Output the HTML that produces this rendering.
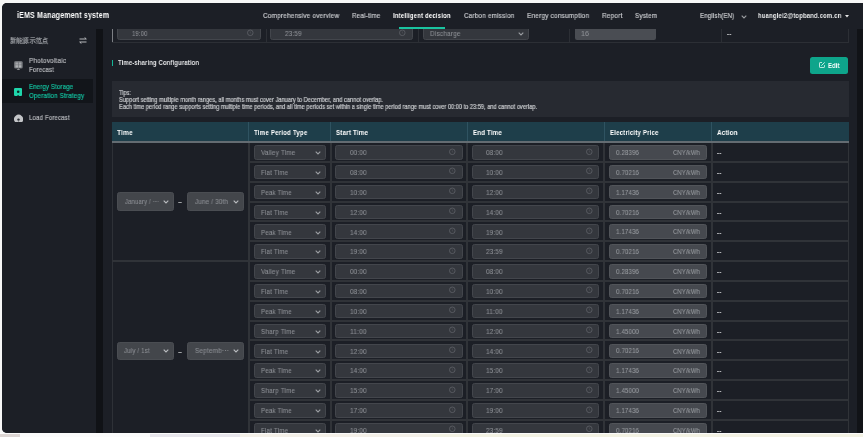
<!DOCTYPE html>
<html><head><meta charset="utf-8"><style>
html,body{margin:0;padding:0;}
body{width:863px;height:437px;position:relative;overflow:hidden;background:#f7f7f7;font-family:'Liberation Sans', sans-serif;}
.t{position:absolute;white-space:nowrap;transform-origin:0 0;will-change:transform;-webkit-text-stroke:0.2px currentColor;}
.b{-webkit-text-stroke:0;}
.g{-webkit-text-stroke:0.1px currentColor;}
</style></head><body>
<div style="position:absolute;left:1.5px;top:2.5px;width:861.5px;height:430.0px;background:#1c1f26;border-radius:5px 0 0 5px;"></div>
<div style="position:absolute;left:112px;top:28px;width:1px;height:14.5px;background:#7d8085;"></div>
<div style="position:absolute;left:112px;top:42px;width:737px;height:1px;background:#2c2f35;"></div>
<div style="position:absolute;left:266px;top:28px;width:1px;height:14.5px;background:#2c2f35;"></div>
<div style="position:absolute;left:418px;top:28px;width:1px;height:14.5px;background:#2c2f35;"></div>
<div style="position:absolute;left:569px;top:28px;width:1px;height:14.5px;background:#2c2f35;"></div>
<div style="position:absolute;left:721px;top:28px;width:1px;height:14.5px;background:#2c2f35;"></div>
<div style="position:absolute;left:848px;top:28px;width:1px;height:14.5px;background:#2c2f35;"></div>
<div style="position:absolute;left:117px;top:24px;width:144px;height:16px;background:#34373d;box-sizing:border-box;border:1px solid #43464c;border-radius:2.5px;"></div>
<div style="position:absolute;left:270px;top:24px;width:143px;height:16px;background:#34373d;box-sizing:border-box;border:1px solid #43464c;border-radius:2.5px;"></div>
<div style="position:absolute;left:423px;top:24px;width:106px;height:16px;background:#34373d;box-sizing:border-box;border:1px solid #43464c;border-radius:2.5px;"></div>
<div style="position:absolute;left:574.5px;top:24px;width:81.5px;height:16px;background:#4a4d53;border-radius:2px;"></div>
<span class="t g" style="transform:scaleX(0.8046);left:131.60px;top:29.85px;font-size:7.26px;line-height:7.26px;color:#8b8e93;font-weight:normal;letter-spacing:0.218px;">19:00</span>
<svg style="position:absolute;left:246.0px;top:29.0px" width="8" height="8" viewBox="0 0 8 8"><circle cx="4.3" cy="3.8" r="2.8" fill="none" stroke="#5f6268" stroke-width="0.8"/><path d="M4.3 2.4 V3.9 L5.2 4.6" fill="none" stroke="#55585e" stroke-width="0.6"/></svg>
<svg style="position:absolute;left:398.3px;top:29.0px" width="8" height="8" viewBox="0 0 8 8"><circle cx="4.3" cy="3.8" r="2.8" fill="none" stroke="#5f6268" stroke-width="0.8"/><path d="M4.3 2.4 V3.9 L5.2 4.6" fill="none" stroke="#55585e" stroke-width="0.6"/></svg>
<svg style="position:absolute;left:517.5px;top:31.8px" width="6" height="4" viewBox="0 0 6 4"><path d="M0.7 0.7 L3 2.9 L5.3 0.7" fill="none" stroke="#9a9da1" stroke-width="1.15"/></svg>
<span class="t g" style="transform:scaleX(0.8677);left:285.00px;top:29.85px;font-size:7.26px;line-height:7.26px;color:#8b8e93;font-weight:normal;letter-spacing:0.218px;">23:59</span>
<span class="t g" style="transform:scaleX(0.8738);left:429.80px;top:29.76px;font-size:7.37px;line-height:7.37px;color:#8b8e93;font-weight:normal;letter-spacing:0.221px;">Discharge</span>
<span class="t g" style="left:581.00px;top:29.85px;font-size:7.26px;line-height:7.26px;color:#8b8e93;font-weight:normal;letter-spacing:0px;">16</span>
<span class="t" style="transform:scaleX(0.8519);left:727.20px;top:30.05px;font-size:7.26px;line-height:7.26px;color:#d8d9db;font-weight:normal;letter-spacing:0.218px;">--</span>
<div style="position:absolute;left:111.8px;top:59.7px;width:1.7000000000000028px;height:6.299999999999997px;background:#14b496;"></div>
<span class="t b" style="transform:scaleX(0.8070);left:118.00px;top:59.05px;font-size:7.26px;line-height:7.26px;color:#e6e7e9;font-weight:bold;letter-spacing:0.218px;">Time-sharing Configuration</span>
<div style="position:absolute;left:810px;top:56.6px;width:38.299999999999955px;height:17.699999999999996px;background:#0ea58b;border-radius:2.5px;"></div>
<span class="t b" style="transform:scaleX(0.7411);left:828.00px;top:61.50px;font-size:7.92px;line-height:7.92px;color:#ffffff;font-weight:bold;letter-spacing:0.238px;">Edit</span>
<div style="position:absolute;left:112px;top:81px;width:737px;height:36px;background:#272a31;"></div>
<span class="t" style="transform:scaleX(0.8400);left:119.30px;top:89.51px;font-size:6.6px;line-height:6.6px;color:#c9cbce;font-weight:normal;letter-spacing:0.0px;">Tips:</span>
<span class="t" style="transform:scaleX(0.8657);left:119.30px;top:96.81px;font-size:6.6px;line-height:6.6px;color:#c9cbce;font-weight:normal;letter-spacing:0.0px;">Support setting multiple month ranges, all months must cover January to December, and cannot overlap.</span>
<span class="t" style="transform:scaleX(0.8594);left:119.30px;top:103.51px;font-size:6.6px;line-height:6.6px;color:#c9cbce;font-weight:normal;letter-spacing:0.0px;">Each time period range supports setting multiple time periods, and all time periods set within a single time period range must cover 00:00 to 23:59, and cannot overlap.</span>
<div style="position:absolute;left:112px;top:122px;width:737px;height:19px;background:#1e3e4a;"></div>
<div style="position:absolute;left:112px;top:141px;width:737px;height:2px;background:#646c72;"></div>
<div style="position:absolute;left:248px;top:122px;width:1px;height:19px;background:#2f5361;"></div>
<div style="position:absolute;left:330px;top:122px;width:1px;height:19px;background:#2f5361;"></div>
<div style="position:absolute;left:467px;top:122px;width:1px;height:19px;background:#2f5361;"></div>
<div style="position:absolute;left:604px;top:122px;width:1px;height:19px;background:#2f5361;"></div>
<div style="position:absolute;left:711px;top:122px;width:1px;height:19px;background:#2f5361;"></div>
<span class="t b" style="transform:scaleX(0.8938);left:117.00px;top:129.15px;font-size:7.26px;line-height:7.26px;color:#ffffff;font-weight:bold;letter-spacing:0.218px;">Time</span>
<span class="t b" style="transform:scaleX(0.8456);left:254.00px;top:129.15px;font-size:7.26px;line-height:7.26px;color:#ffffff;font-weight:bold;letter-spacing:0.218px;">Time Period Type</span>
<span class="t b" style="transform:scaleX(0.8580);left:336.00px;top:129.15px;font-size:7.26px;line-height:7.26px;color:#ffffff;font-weight:bold;letter-spacing:0.218px;">Start Time</span>
<span class="t b" style="transform:scaleX(0.8463);left:472.90px;top:129.15px;font-size:7.26px;line-height:7.26px;color:#ffffff;font-weight:bold;letter-spacing:0.218px;">End Time</span>
<span class="t b" style="transform:scaleX(0.8375);left:609.50px;top:129.15px;font-size:7.26px;line-height:7.26px;color:#ffffff;font-weight:bold;letter-spacing:0.218px;">Electricity Price</span>
<span class="t b" style="transform:scaleX(0.8666);left:716.50px;top:129.15px;font-size:7.26px;line-height:7.26px;color:#ffffff;font-weight:bold;letter-spacing:0.218px;">Action</span>
<div style="position:absolute;left:112px;top:143px;width:1px;height:290px;background:#2e3137;"></div>
<div style="position:absolute;left:248px;top:143px;width:2px;height:290px;background:#303338;"></div>
<div style="position:absolute;left:330px;top:143px;width:2px;height:290px;background:#303338;"></div>
<div style="position:absolute;left:466px;top:143px;width:2px;height:290px;background:#303338;"></div>
<div style="position:absolute;left:603px;top:143px;width:2px;height:290px;background:#303338;"></div>
<div style="position:absolute;left:711px;top:143px;width:2px;height:290px;background:#303338;"></div>
<div style="position:absolute;left:848px;top:143px;width:1px;height:290px;background:#303338;"></div>
<div style="position:absolute;left:248px;top:161px;width:601px;height:2px;background:#303338;"></div>
<div style="position:absolute;left:254.2px;top:145.1px;width:71.80000000000001px;height:14.5px;background:#34373d;box-sizing:border-box;border:1px solid #43464c;border-radius:2.5px;"></div>
<span class="t g" style="transform:scaleX(0.8640);left:260.70px;top:149.16px;font-size:7.37px;line-height:7.37px;color:#8b8e93;font-weight:normal;letter-spacing:0.221px;">Valley Time</span>
<svg style="position:absolute;left:314.8px;top:151.2px" width="6" height="4" viewBox="0 0 6 4"><path d="M0.7 0.7 L3 2.9 L5.3 0.7" fill="none" stroke="#9a9da1" stroke-width="1.15"/></svg>
<div style="position:absolute;left:335.0px;top:145.1px;width:127.5px;height:14.5px;background:#34373d;box-sizing:border-box;border:1px solid #43464c;border-radius:2.5px;"></div>
<span class="t g" style="transform:scaleX(0.8677);left:349.90px;top:149.25px;font-size:7.26px;line-height:7.26px;color:#8b8e93;font-weight:normal;letter-spacing:0.218px;">00:00</span>
<svg style="position:absolute;left:448.3px;top:147.6px" width="8" height="8" viewBox="0 0 8 8"><circle cx="4.3" cy="3.8" r="2.8" fill="none" stroke="#5f6268" stroke-width="0.8"/><path d="M4.3 2.4 V3.9 L5.2 4.6" fill="none" stroke="#55585e" stroke-width="0.6"/></svg>
<div style="position:absolute;left:472px;top:145.1px;width:127px;height:14.5px;background:#34373d;box-sizing:border-box;border:1px solid #43464c;border-radius:2.5px;"></div>
<span class="t g" style="transform:scaleX(0.8677);left:486.20px;top:149.25px;font-size:7.26px;line-height:7.26px;color:#8b8e93;font-weight:normal;letter-spacing:0.218px;">08:00</span>
<svg style="position:absolute;left:585.3px;top:147.6px" width="8" height="8" viewBox="0 0 8 8"><circle cx="4.3" cy="3.8" r="2.8" fill="none" stroke="#5f6268" stroke-width="0.8"/><path d="M4.3 2.4 V3.9 L5.2 4.6" fill="none" stroke="#55585e" stroke-width="0.6"/></svg>
<div style="position:absolute;left:609px;top:145.1px;width:98px;height:14.5px;background:#46494f;box-sizing:border-box;border:1px solid #515459;border-radius:2.5px;"></div>
<span class="t g" style="transform:scaleX(0.8488);left:616.30px;top:150.05px;font-size:7.15px;line-height:7.15px;color:#95989d;font-weight:normal;letter-spacing:0.214px;">0.28396</span>
<span class="t g" style="transform:scaleX(0.8607);left:673.20px;top:150.13px;font-size:6.82px;line-height:6.82px;color:#95989d;font-weight:normal;letter-spacing:0.205px;">CNY/kWh</span>
<span class="t" style="transform:scaleX(0.8519);left:716.60px;top:149.15px;font-size:7.26px;line-height:7.26px;color:#d8d9db;font-weight:normal;letter-spacing:0.218px;">--</span>
<div style="position:absolute;left:248px;top:181px;width:601px;height:2px;background:#303338;"></div>
<div style="position:absolute;left:254.2px;top:164.94px;width:71.80000000000001px;height:14.5px;background:#34373d;box-sizing:border-box;border:1px solid #43464c;border-radius:2.5px;"></div>
<span class="t g" style="transform:scaleX(0.8461);left:260.70px;top:169.00px;font-size:7.37px;line-height:7.37px;color:#8b8e93;font-weight:normal;letter-spacing:0.221px;">Flat Time</span>
<svg style="position:absolute;left:314.8px;top:171.04px" width="6" height="4" viewBox="0 0 6 4"><path d="M0.7 0.7 L3 2.9 L5.3 0.7" fill="none" stroke="#9a9da1" stroke-width="1.15"/></svg>
<div style="position:absolute;left:335.0px;top:164.94px;width:127.5px;height:14.5px;background:#34373d;box-sizing:border-box;border:1px solid #43464c;border-radius:2.5px;"></div>
<span class="t g" style="transform:scaleX(0.8677);left:349.90px;top:169.09px;font-size:7.26px;line-height:7.26px;color:#8b8e93;font-weight:normal;letter-spacing:0.218px;">08:00</span>
<svg style="position:absolute;left:448.3px;top:167.44px" width="8" height="8" viewBox="0 0 8 8"><circle cx="4.3" cy="3.8" r="2.8" fill="none" stroke="#5f6268" stroke-width="0.8"/><path d="M4.3 2.4 V3.9 L5.2 4.6" fill="none" stroke="#55585e" stroke-width="0.6"/></svg>
<div style="position:absolute;left:472px;top:164.94px;width:127px;height:14.5px;background:#34373d;box-sizing:border-box;border:1px solid #43464c;border-radius:2.5px;"></div>
<span class="t g" style="transform:scaleX(0.8677);left:486.20px;top:169.09px;font-size:7.26px;line-height:7.26px;color:#8b8e93;font-weight:normal;letter-spacing:0.218px;">10:00</span>
<svg style="position:absolute;left:585.3px;top:167.44px" width="8" height="8" viewBox="0 0 8 8"><circle cx="4.3" cy="3.8" r="2.8" fill="none" stroke="#5f6268" stroke-width="0.8"/><path d="M4.3 2.4 V3.9 L5.2 4.6" fill="none" stroke="#55585e" stroke-width="0.6"/></svg>
<div style="position:absolute;left:609px;top:164.94px;width:98px;height:14.5px;background:#46494f;box-sizing:border-box;border:1px solid #515459;border-radius:2.5px;"></div>
<span class="t g" style="transform:scaleX(0.8488);left:616.30px;top:169.89px;font-size:7.15px;line-height:7.15px;color:#95989d;font-weight:normal;letter-spacing:0.214px;">0.70216</span>
<span class="t g" style="transform:scaleX(0.8607);left:673.20px;top:169.97px;font-size:6.82px;line-height:6.82px;color:#95989d;font-weight:normal;letter-spacing:0.205px;">CNY/kWh</span>
<span class="t" style="transform:scaleX(0.8519);left:716.60px;top:168.99px;font-size:7.26px;line-height:7.26px;color:#d8d9db;font-weight:normal;letter-spacing:0.218px;">--</span>
<div style="position:absolute;left:248px;top:201px;width:601px;height:2px;background:#303338;"></div>
<div style="position:absolute;left:254.2px;top:184.78px;width:71.80000000000001px;height:14.5px;background:#34373d;box-sizing:border-box;border:1px solid #43464c;border-radius:2.5px;"></div>
<span class="t g" style="transform:scaleX(0.8373);left:260.70px;top:188.84px;font-size:7.37px;line-height:7.37px;color:#8b8e93;font-weight:normal;letter-spacing:0.221px;">Peak Time</span>
<svg style="position:absolute;left:314.8px;top:190.88px" width="6" height="4" viewBox="0 0 6 4"><path d="M0.7 0.7 L3 2.9 L5.3 0.7" fill="none" stroke="#9a9da1" stroke-width="1.15"/></svg>
<div style="position:absolute;left:335.0px;top:184.78px;width:127.5px;height:14.5px;background:#34373d;box-sizing:border-box;border:1px solid #43464c;border-radius:2.5px;"></div>
<span class="t g" style="transform:scaleX(0.8677);left:349.90px;top:188.93px;font-size:7.26px;line-height:7.26px;color:#8b8e93;font-weight:normal;letter-spacing:0.218px;">10:00</span>
<svg style="position:absolute;left:448.3px;top:187.28px" width="8" height="8" viewBox="0 0 8 8"><circle cx="4.3" cy="3.8" r="2.8" fill="none" stroke="#5f6268" stroke-width="0.8"/><path d="M4.3 2.4 V3.9 L5.2 4.6" fill="none" stroke="#55585e" stroke-width="0.6"/></svg>
<div style="position:absolute;left:472px;top:184.78px;width:127px;height:14.5px;background:#34373d;box-sizing:border-box;border:1px solid #43464c;border-radius:2.5px;"></div>
<span class="t g" style="transform:scaleX(0.8677);left:486.20px;top:188.93px;font-size:7.26px;line-height:7.26px;color:#8b8e93;font-weight:normal;letter-spacing:0.218px;">12:00</span>
<svg style="position:absolute;left:585.3px;top:187.28px" width="8" height="8" viewBox="0 0 8 8"><circle cx="4.3" cy="3.8" r="2.8" fill="none" stroke="#5f6268" stroke-width="0.8"/><path d="M4.3 2.4 V3.9 L5.2 4.6" fill="none" stroke="#55585e" stroke-width="0.6"/></svg>
<div style="position:absolute;left:609px;top:184.78px;width:98px;height:14.5px;background:#46494f;box-sizing:border-box;border:1px solid #515459;border-radius:2.5px;"></div>
<span class="t g" style="transform:scaleX(0.8488);left:616.30px;top:189.73px;font-size:7.15px;line-height:7.15px;color:#95989d;font-weight:normal;letter-spacing:0.214px;">1.17436</span>
<span class="t g" style="transform:scaleX(0.8607);left:673.20px;top:189.81px;font-size:6.82px;line-height:6.82px;color:#95989d;font-weight:normal;letter-spacing:0.205px;">CNY/kWh</span>
<span class="t" style="transform:scaleX(0.8519);left:716.60px;top:188.83px;font-size:7.26px;line-height:7.26px;color:#d8d9db;font-weight:normal;letter-spacing:0.218px;">--</span>
<div style="position:absolute;left:248px;top:220px;width:601px;height:2px;background:#303338;"></div>
<div style="position:absolute;left:254.2px;top:204.61999999999998px;width:71.80000000000001px;height:14.5px;background:#34373d;box-sizing:border-box;border:1px solid #43464c;border-radius:2.5px;"></div>
<span class="t g" style="transform:scaleX(0.8461);left:260.70px;top:208.68px;font-size:7.37px;line-height:7.37px;color:#8b8e93;font-weight:normal;letter-spacing:0.221px;">Flat Time</span>
<svg style="position:absolute;left:314.8px;top:210.71999999999997px" width="6" height="4" viewBox="0 0 6 4"><path d="M0.7 0.7 L3 2.9 L5.3 0.7" fill="none" stroke="#9a9da1" stroke-width="1.15"/></svg>
<div style="position:absolute;left:335.0px;top:204.61999999999998px;width:127.5px;height:14.5px;background:#34373d;box-sizing:border-box;border:1px solid #43464c;border-radius:2.5px;"></div>
<span class="t g" style="transform:scaleX(0.8677);left:349.90px;top:208.77px;font-size:7.26px;line-height:7.26px;color:#8b8e93;font-weight:normal;letter-spacing:0.218px;">12:00</span>
<svg style="position:absolute;left:448.3px;top:207.11999999999998px" width="8" height="8" viewBox="0 0 8 8"><circle cx="4.3" cy="3.8" r="2.8" fill="none" stroke="#5f6268" stroke-width="0.8"/><path d="M4.3 2.4 V3.9 L5.2 4.6" fill="none" stroke="#55585e" stroke-width="0.6"/></svg>
<div style="position:absolute;left:472px;top:204.61999999999998px;width:127px;height:14.5px;background:#34373d;box-sizing:border-box;border:1px solid #43464c;border-radius:2.5px;"></div>
<span class="t g" style="transform:scaleX(0.8677);left:486.20px;top:208.77px;font-size:7.26px;line-height:7.26px;color:#8b8e93;font-weight:normal;letter-spacing:0.218px;">14:00</span>
<svg style="position:absolute;left:585.3px;top:207.11999999999998px" width="8" height="8" viewBox="0 0 8 8"><circle cx="4.3" cy="3.8" r="2.8" fill="none" stroke="#5f6268" stroke-width="0.8"/><path d="M4.3 2.4 V3.9 L5.2 4.6" fill="none" stroke="#55585e" stroke-width="0.6"/></svg>
<div style="position:absolute;left:609px;top:204.61999999999998px;width:98px;height:14.5px;background:#46494f;box-sizing:border-box;border:1px solid #515459;border-radius:2.5px;"></div>
<span class="t g" style="transform:scaleX(0.8488);left:616.30px;top:209.57px;font-size:7.15px;line-height:7.15px;color:#95989d;font-weight:normal;letter-spacing:0.214px;">0.70216</span>
<span class="t g" style="transform:scaleX(0.8607);left:673.20px;top:209.65px;font-size:6.82px;line-height:6.82px;color:#95989d;font-weight:normal;letter-spacing:0.205px;">CNY/kWh</span>
<span class="t" style="transform:scaleX(0.8519);left:716.60px;top:208.67px;font-size:7.26px;line-height:7.26px;color:#d8d9db;font-weight:normal;letter-spacing:0.218px;">--</span>
<div style="position:absolute;left:248px;top:240px;width:601px;height:2px;background:#303338;"></div>
<div style="position:absolute;left:254.2px;top:224.46px;width:71.80000000000001px;height:14.5px;background:#34373d;box-sizing:border-box;border:1px solid #43464c;border-radius:2.5px;"></div>
<span class="t g" style="transform:scaleX(0.8373);left:260.70px;top:228.52px;font-size:7.37px;line-height:7.37px;color:#8b8e93;font-weight:normal;letter-spacing:0.221px;">Peak Time</span>
<svg style="position:absolute;left:314.8px;top:230.56px" width="6" height="4" viewBox="0 0 6 4"><path d="M0.7 0.7 L3 2.9 L5.3 0.7" fill="none" stroke="#9a9da1" stroke-width="1.15"/></svg>
<div style="position:absolute;left:335.0px;top:224.46px;width:127.5px;height:14.5px;background:#34373d;box-sizing:border-box;border:1px solid #43464c;border-radius:2.5px;"></div>
<span class="t g" style="transform:scaleX(0.8677);left:349.90px;top:228.61px;font-size:7.26px;line-height:7.26px;color:#8b8e93;font-weight:normal;letter-spacing:0.218px;">14:00</span>
<svg style="position:absolute;left:448.3px;top:226.96px" width="8" height="8" viewBox="0 0 8 8"><circle cx="4.3" cy="3.8" r="2.8" fill="none" stroke="#5f6268" stroke-width="0.8"/><path d="M4.3 2.4 V3.9 L5.2 4.6" fill="none" stroke="#55585e" stroke-width="0.6"/></svg>
<div style="position:absolute;left:472px;top:224.46px;width:127px;height:14.5px;background:#34373d;box-sizing:border-box;border:1px solid #43464c;border-radius:2.5px;"></div>
<span class="t g" style="transform:scaleX(0.8677);left:486.20px;top:228.61px;font-size:7.26px;line-height:7.26px;color:#8b8e93;font-weight:normal;letter-spacing:0.218px;">19:00</span>
<svg style="position:absolute;left:585.3px;top:226.96px" width="8" height="8" viewBox="0 0 8 8"><circle cx="4.3" cy="3.8" r="2.8" fill="none" stroke="#5f6268" stroke-width="0.8"/><path d="M4.3 2.4 V3.9 L5.2 4.6" fill="none" stroke="#55585e" stroke-width="0.6"/></svg>
<div style="position:absolute;left:609px;top:224.46px;width:98px;height:14.5px;background:#46494f;box-sizing:border-box;border:1px solid #515459;border-radius:2.5px;"></div>
<span class="t g" style="transform:scaleX(0.8488);left:616.30px;top:229.41px;font-size:7.15px;line-height:7.15px;color:#95989d;font-weight:normal;letter-spacing:0.214px;">1.17436</span>
<span class="t g" style="transform:scaleX(0.8607);left:673.20px;top:229.49px;font-size:6.82px;line-height:6.82px;color:#95989d;font-weight:normal;letter-spacing:0.205px;">CNY/kWh</span>
<span class="t" style="transform:scaleX(0.8519);left:716.60px;top:228.51px;font-size:7.26px;line-height:7.26px;color:#d8d9db;font-weight:normal;letter-spacing:0.218px;">--</span>
<div style="position:absolute;left:112px;top:260px;width:737px;height:2px;background:#303338;"></div>
<div style="position:absolute;left:254.2px;top:244.29999999999998px;width:71.80000000000001px;height:14.500000000000028px;background:#34373d;box-sizing:border-box;border:1px solid #43464c;border-radius:2.5px;"></div>
<span class="t g" style="transform:scaleX(0.8461);left:260.70px;top:248.36px;font-size:7.37px;line-height:7.37px;color:#8b8e93;font-weight:normal;letter-spacing:0.221px;">Flat Time</span>
<svg style="position:absolute;left:314.8px;top:250.39999999999998px" width="6" height="4" viewBox="0 0 6 4"><path d="M0.7 0.7 L3 2.9 L5.3 0.7" fill="none" stroke="#9a9da1" stroke-width="1.15"/></svg>
<div style="position:absolute;left:335.0px;top:244.29999999999998px;width:127.5px;height:14.500000000000028px;background:#34373d;box-sizing:border-box;border:1px solid #43464c;border-radius:2.5px;"></div>
<span class="t g" style="transform:scaleX(0.8677);left:349.90px;top:248.45px;font-size:7.26px;line-height:7.26px;color:#8b8e93;font-weight:normal;letter-spacing:0.218px;">19:00</span>
<svg style="position:absolute;left:448.3px;top:246.79999999999998px" width="8" height="8" viewBox="0 0 8 8"><circle cx="4.3" cy="3.8" r="2.8" fill="none" stroke="#5f6268" stroke-width="0.8"/><path d="M4.3 2.4 V3.9 L5.2 4.6" fill="none" stroke="#55585e" stroke-width="0.6"/></svg>
<div style="position:absolute;left:472px;top:244.29999999999998px;width:127px;height:14.500000000000028px;background:#34373d;box-sizing:border-box;border:1px solid #43464c;border-radius:2.5px;"></div>
<span class="t g" style="transform:scaleX(0.8677);left:486.20px;top:248.45px;font-size:7.26px;line-height:7.26px;color:#8b8e93;font-weight:normal;letter-spacing:0.218px;">23:59</span>
<svg style="position:absolute;left:585.3px;top:246.79999999999998px" width="8" height="8" viewBox="0 0 8 8"><circle cx="4.3" cy="3.8" r="2.8" fill="none" stroke="#5f6268" stroke-width="0.8"/><path d="M4.3 2.4 V3.9 L5.2 4.6" fill="none" stroke="#55585e" stroke-width="0.6"/></svg>
<div style="position:absolute;left:609px;top:244.29999999999998px;width:98px;height:14.500000000000028px;background:#46494f;box-sizing:border-box;border:1px solid #515459;border-radius:2.5px;"></div>
<span class="t g" style="transform:scaleX(0.8488);left:616.30px;top:249.25px;font-size:7.15px;line-height:7.15px;color:#95989d;font-weight:normal;letter-spacing:0.214px;">0.70216</span>
<span class="t g" style="transform:scaleX(0.8607);left:673.20px;top:249.33px;font-size:6.82px;line-height:6.82px;color:#95989d;font-weight:normal;letter-spacing:0.205px;">CNY/kWh</span>
<span class="t" style="transform:scaleX(0.8519);left:716.60px;top:248.35px;font-size:7.26px;line-height:7.26px;color:#d8d9db;font-weight:normal;letter-spacing:0.218px;">--</span>
<div style="position:absolute;left:248px;top:280px;width:601px;height:2px;background:#303338;"></div>
<div style="position:absolute;left:254.2px;top:264.14px;width:71.80000000000001px;height:14.5px;background:#34373d;box-sizing:border-box;border:1px solid #43464c;border-radius:2.5px;"></div>
<span class="t g" style="transform:scaleX(0.8640);left:260.70px;top:268.20px;font-size:7.37px;line-height:7.37px;color:#8b8e93;font-weight:normal;letter-spacing:0.221px;">Valley Time</span>
<svg style="position:absolute;left:314.8px;top:270.23999999999995px" width="6" height="4" viewBox="0 0 6 4"><path d="M0.7 0.7 L3 2.9 L5.3 0.7" fill="none" stroke="#9a9da1" stroke-width="1.15"/></svg>
<div style="position:absolute;left:335.0px;top:264.14px;width:127.5px;height:14.5px;background:#34373d;box-sizing:border-box;border:1px solid #43464c;border-radius:2.5px;"></div>
<span class="t g" style="transform:scaleX(0.8677);left:349.90px;top:268.29px;font-size:7.26px;line-height:7.26px;color:#8b8e93;font-weight:normal;letter-spacing:0.218px;">00:00</span>
<svg style="position:absolute;left:448.3px;top:266.64px" width="8" height="8" viewBox="0 0 8 8"><circle cx="4.3" cy="3.8" r="2.8" fill="none" stroke="#5f6268" stroke-width="0.8"/><path d="M4.3 2.4 V3.9 L5.2 4.6" fill="none" stroke="#55585e" stroke-width="0.6"/></svg>
<div style="position:absolute;left:472px;top:264.14px;width:127px;height:14.5px;background:#34373d;box-sizing:border-box;border:1px solid #43464c;border-radius:2.5px;"></div>
<span class="t g" style="transform:scaleX(0.8677);left:486.20px;top:268.29px;font-size:7.26px;line-height:7.26px;color:#8b8e93;font-weight:normal;letter-spacing:0.218px;">08:00</span>
<svg style="position:absolute;left:585.3px;top:266.64px" width="8" height="8" viewBox="0 0 8 8"><circle cx="4.3" cy="3.8" r="2.8" fill="none" stroke="#5f6268" stroke-width="0.8"/><path d="M4.3 2.4 V3.9 L5.2 4.6" fill="none" stroke="#55585e" stroke-width="0.6"/></svg>
<div style="position:absolute;left:609px;top:264.14px;width:98px;height:14.5px;background:#46494f;box-sizing:border-box;border:1px solid #515459;border-radius:2.5px;"></div>
<span class="t g" style="transform:scaleX(0.8488);left:616.30px;top:269.09px;font-size:7.15px;line-height:7.15px;color:#95989d;font-weight:normal;letter-spacing:0.214px;">0.28396</span>
<span class="t g" style="transform:scaleX(0.8607);left:673.20px;top:269.17px;font-size:6.82px;line-height:6.82px;color:#95989d;font-weight:normal;letter-spacing:0.205px;">CNY/kWh</span>
<span class="t" style="transform:scaleX(0.8519);left:716.60px;top:268.19px;font-size:7.26px;line-height:7.26px;color:#d8d9db;font-weight:normal;letter-spacing:0.218px;">--</span>
<div style="position:absolute;left:248px;top:300px;width:601px;height:2px;background:#303338;"></div>
<div style="position:absolute;left:254.2px;top:283.98px;width:71.80000000000001px;height:14.5px;background:#34373d;box-sizing:border-box;border:1px solid #43464c;border-radius:2.5px;"></div>
<span class="t g" style="transform:scaleX(0.8461);left:260.70px;top:288.04px;font-size:7.37px;line-height:7.37px;color:#8b8e93;font-weight:normal;letter-spacing:0.221px;">Flat Time</span>
<svg style="position:absolute;left:314.8px;top:290.08px" width="6" height="4" viewBox="0 0 6 4"><path d="M0.7 0.7 L3 2.9 L5.3 0.7" fill="none" stroke="#9a9da1" stroke-width="1.15"/></svg>
<div style="position:absolute;left:335.0px;top:283.98px;width:127.5px;height:14.5px;background:#34373d;box-sizing:border-box;border:1px solid #43464c;border-radius:2.5px;"></div>
<span class="t g" style="transform:scaleX(0.8677);left:349.90px;top:288.13px;font-size:7.26px;line-height:7.26px;color:#8b8e93;font-weight:normal;letter-spacing:0.218px;">08:00</span>
<svg style="position:absolute;left:448.3px;top:286.48px" width="8" height="8" viewBox="0 0 8 8"><circle cx="4.3" cy="3.8" r="2.8" fill="none" stroke="#5f6268" stroke-width="0.8"/><path d="M4.3 2.4 V3.9 L5.2 4.6" fill="none" stroke="#55585e" stroke-width="0.6"/></svg>
<div style="position:absolute;left:472px;top:283.98px;width:127px;height:14.5px;background:#34373d;box-sizing:border-box;border:1px solid #43464c;border-radius:2.5px;"></div>
<span class="t g" style="transform:scaleX(0.8677);left:486.20px;top:288.13px;font-size:7.26px;line-height:7.26px;color:#8b8e93;font-weight:normal;letter-spacing:0.218px;">10:00</span>
<svg style="position:absolute;left:585.3px;top:286.48px" width="8" height="8" viewBox="0 0 8 8"><circle cx="4.3" cy="3.8" r="2.8" fill="none" stroke="#5f6268" stroke-width="0.8"/><path d="M4.3 2.4 V3.9 L5.2 4.6" fill="none" stroke="#55585e" stroke-width="0.6"/></svg>
<div style="position:absolute;left:609px;top:283.98px;width:98px;height:14.5px;background:#46494f;box-sizing:border-box;border:1px solid #515459;border-radius:2.5px;"></div>
<span class="t g" style="transform:scaleX(0.8488);left:616.30px;top:288.93px;font-size:7.15px;line-height:7.15px;color:#95989d;font-weight:normal;letter-spacing:0.214px;">0.70216</span>
<span class="t g" style="transform:scaleX(0.8607);left:673.20px;top:289.01px;font-size:6.82px;line-height:6.82px;color:#95989d;font-weight:normal;letter-spacing:0.205px;">CNY/kWh</span>
<span class="t" style="transform:scaleX(0.8519);left:716.60px;top:288.03px;font-size:7.26px;line-height:7.26px;color:#d8d9db;font-weight:normal;letter-spacing:0.218px;">--</span>
<div style="position:absolute;left:248px;top:320px;width:601px;height:2px;background:#303338;"></div>
<div style="position:absolute;left:254.2px;top:303.82000000000005px;width:71.80000000000001px;height:14.5px;background:#34373d;box-sizing:border-box;border:1px solid #43464c;border-radius:2.5px;"></div>
<span class="t g" style="transform:scaleX(0.8373);left:260.70px;top:307.88px;font-size:7.37px;line-height:7.37px;color:#8b8e93;font-weight:normal;letter-spacing:0.221px;">Peak Time</span>
<svg style="position:absolute;left:314.8px;top:309.92px" width="6" height="4" viewBox="0 0 6 4"><path d="M0.7 0.7 L3 2.9 L5.3 0.7" fill="none" stroke="#9a9da1" stroke-width="1.15"/></svg>
<div style="position:absolute;left:335.0px;top:303.82000000000005px;width:127.5px;height:14.5px;background:#34373d;box-sizing:border-box;border:1px solid #43464c;border-radius:2.5px;"></div>
<span class="t g" style="transform:scaleX(0.8677);left:349.90px;top:307.97px;font-size:7.26px;line-height:7.26px;color:#8b8e93;font-weight:normal;letter-spacing:0.218px;">10:00</span>
<svg style="position:absolute;left:448.3px;top:306.32000000000005px" width="8" height="8" viewBox="0 0 8 8"><circle cx="4.3" cy="3.8" r="2.8" fill="none" stroke="#5f6268" stroke-width="0.8"/><path d="M4.3 2.4 V3.9 L5.2 4.6" fill="none" stroke="#55585e" stroke-width="0.6"/></svg>
<div style="position:absolute;left:472px;top:303.82000000000005px;width:127px;height:14.5px;background:#34373d;box-sizing:border-box;border:1px solid #43464c;border-radius:2.5px;"></div>
<span class="t g" style="transform:scaleX(0.8926);left:486.20px;top:307.97px;font-size:7.26px;line-height:7.26px;color:#8b8e93;font-weight:normal;letter-spacing:0.218px;">11:00</span>
<svg style="position:absolute;left:585.3px;top:306.32000000000005px" width="8" height="8" viewBox="0 0 8 8"><circle cx="4.3" cy="3.8" r="2.8" fill="none" stroke="#5f6268" stroke-width="0.8"/><path d="M4.3 2.4 V3.9 L5.2 4.6" fill="none" stroke="#55585e" stroke-width="0.6"/></svg>
<div style="position:absolute;left:609px;top:303.82000000000005px;width:98px;height:14.5px;background:#46494f;box-sizing:border-box;border:1px solid #515459;border-radius:2.5px;"></div>
<span class="t g" style="transform:scaleX(0.8488);left:616.30px;top:308.77px;font-size:7.15px;line-height:7.15px;color:#95989d;font-weight:normal;letter-spacing:0.214px;">1.17436</span>
<span class="t g" style="transform:scaleX(0.8607);left:673.20px;top:308.85px;font-size:6.82px;line-height:6.82px;color:#95989d;font-weight:normal;letter-spacing:0.205px;">CNY/kWh</span>
<span class="t" style="transform:scaleX(0.8519);left:716.60px;top:307.87px;font-size:7.26px;line-height:7.26px;color:#d8d9db;font-weight:normal;letter-spacing:0.218px;">--</span>
<div style="position:absolute;left:248px;top:339px;width:601px;height:2px;background:#303338;"></div>
<div style="position:absolute;left:254.2px;top:323.66px;width:71.80000000000001px;height:14.5px;background:#34373d;box-sizing:border-box;border:1px solid #43464c;border-radius:2.5px;"></div>
<span class="t g" style="transform:scaleX(0.8581);left:260.70px;top:327.72px;font-size:7.37px;line-height:7.37px;color:#8b8e93;font-weight:normal;letter-spacing:0.221px;">Sharp Time</span>
<svg style="position:absolute;left:314.8px;top:329.76px" width="6" height="4" viewBox="0 0 6 4"><path d="M0.7 0.7 L3 2.9 L5.3 0.7" fill="none" stroke="#9a9da1" stroke-width="1.15"/></svg>
<div style="position:absolute;left:335.0px;top:323.66px;width:127.5px;height:14.5px;background:#34373d;box-sizing:border-box;border:1px solid #43464c;border-radius:2.5px;"></div>
<span class="t g" style="transform:scaleX(0.8926);left:349.90px;top:327.81px;font-size:7.26px;line-height:7.26px;color:#8b8e93;font-weight:normal;letter-spacing:0.218px;">11:00</span>
<svg style="position:absolute;left:448.3px;top:326.16px" width="8" height="8" viewBox="0 0 8 8"><circle cx="4.3" cy="3.8" r="2.8" fill="none" stroke="#5f6268" stroke-width="0.8"/><path d="M4.3 2.4 V3.9 L5.2 4.6" fill="none" stroke="#55585e" stroke-width="0.6"/></svg>
<div style="position:absolute;left:472px;top:323.66px;width:127px;height:14.5px;background:#34373d;box-sizing:border-box;border:1px solid #43464c;border-radius:2.5px;"></div>
<span class="t g" style="transform:scaleX(0.8677);left:486.20px;top:327.81px;font-size:7.26px;line-height:7.26px;color:#8b8e93;font-weight:normal;letter-spacing:0.218px;">12:00</span>
<svg style="position:absolute;left:585.3px;top:326.16px" width="8" height="8" viewBox="0 0 8 8"><circle cx="4.3" cy="3.8" r="2.8" fill="none" stroke="#5f6268" stroke-width="0.8"/><path d="M4.3 2.4 V3.9 L5.2 4.6" fill="none" stroke="#55585e" stroke-width="0.6"/></svg>
<div style="position:absolute;left:609px;top:323.66px;width:98px;height:14.5px;background:#46494f;box-sizing:border-box;border:1px solid #515459;border-radius:2.5px;"></div>
<span class="t g" style="transform:scaleX(0.8488);left:616.30px;top:328.61px;font-size:7.15px;line-height:7.15px;color:#95989d;font-weight:normal;letter-spacing:0.214px;">1.45000</span>
<span class="t g" style="transform:scaleX(0.8607);left:673.20px;top:328.69px;font-size:6.82px;line-height:6.82px;color:#95989d;font-weight:normal;letter-spacing:0.205px;">CNY/kWh</span>
<span class="t" style="transform:scaleX(0.8519);left:716.60px;top:327.71px;font-size:7.26px;line-height:7.26px;color:#d8d9db;font-weight:normal;letter-spacing:0.218px;">--</span>
<div style="position:absolute;left:248px;top:359px;width:601px;height:2px;background:#303338;"></div>
<div style="position:absolute;left:254.2px;top:343.5px;width:71.80000000000001px;height:14.5px;background:#34373d;box-sizing:border-box;border:1px solid #43464c;border-radius:2.5px;"></div>
<span class="t g" style="transform:scaleX(0.8461);left:260.70px;top:347.56px;font-size:7.37px;line-height:7.37px;color:#8b8e93;font-weight:normal;letter-spacing:0.221px;">Flat Time</span>
<svg style="position:absolute;left:314.8px;top:349.59999999999997px" width="6" height="4" viewBox="0 0 6 4"><path d="M0.7 0.7 L3 2.9 L5.3 0.7" fill="none" stroke="#9a9da1" stroke-width="1.15"/></svg>
<div style="position:absolute;left:335.0px;top:343.5px;width:127.5px;height:14.5px;background:#34373d;box-sizing:border-box;border:1px solid #43464c;border-radius:2.5px;"></div>
<span class="t g" style="transform:scaleX(0.8677);left:349.90px;top:347.65px;font-size:7.26px;line-height:7.26px;color:#8b8e93;font-weight:normal;letter-spacing:0.218px;">12:00</span>
<svg style="position:absolute;left:448.3px;top:346.0px" width="8" height="8" viewBox="0 0 8 8"><circle cx="4.3" cy="3.8" r="2.8" fill="none" stroke="#5f6268" stroke-width="0.8"/><path d="M4.3 2.4 V3.9 L5.2 4.6" fill="none" stroke="#55585e" stroke-width="0.6"/></svg>
<div style="position:absolute;left:472px;top:343.5px;width:127px;height:14.5px;background:#34373d;box-sizing:border-box;border:1px solid #43464c;border-radius:2.5px;"></div>
<span class="t g" style="transform:scaleX(0.8677);left:486.20px;top:347.65px;font-size:7.26px;line-height:7.26px;color:#8b8e93;font-weight:normal;letter-spacing:0.218px;">14:00</span>
<svg style="position:absolute;left:585.3px;top:346.0px" width="8" height="8" viewBox="0 0 8 8"><circle cx="4.3" cy="3.8" r="2.8" fill="none" stroke="#5f6268" stroke-width="0.8"/><path d="M4.3 2.4 V3.9 L5.2 4.6" fill="none" stroke="#55585e" stroke-width="0.6"/></svg>
<div style="position:absolute;left:609px;top:343.5px;width:98px;height:14.5px;background:#46494f;box-sizing:border-box;border:1px solid #515459;border-radius:2.5px;"></div>
<span class="t g" style="transform:scaleX(0.8488);left:616.30px;top:348.45px;font-size:7.15px;line-height:7.15px;color:#95989d;font-weight:normal;letter-spacing:0.214px;">0.70216</span>
<span class="t g" style="transform:scaleX(0.8607);left:673.20px;top:348.53px;font-size:6.82px;line-height:6.82px;color:#95989d;font-weight:normal;letter-spacing:0.205px;">CNY/kWh</span>
<span class="t" style="transform:scaleX(0.8519);left:716.60px;top:347.55px;font-size:7.26px;line-height:7.26px;color:#d8d9db;font-weight:normal;letter-spacing:0.218px;">--</span>
<div style="position:absolute;left:248px;top:379px;width:601px;height:2px;background:#303338;"></div>
<div style="position:absolute;left:254.2px;top:363.34000000000003px;width:71.80000000000001px;height:14.5px;background:#34373d;box-sizing:border-box;border:1px solid #43464c;border-radius:2.5px;"></div>
<span class="t g" style="transform:scaleX(0.8373);left:260.70px;top:367.40px;font-size:7.37px;line-height:7.37px;color:#8b8e93;font-weight:normal;letter-spacing:0.221px;">Peak Time</span>
<svg style="position:absolute;left:314.8px;top:369.44px" width="6" height="4" viewBox="0 0 6 4"><path d="M0.7 0.7 L3 2.9 L5.3 0.7" fill="none" stroke="#9a9da1" stroke-width="1.15"/></svg>
<div style="position:absolute;left:335.0px;top:363.34000000000003px;width:127.5px;height:14.5px;background:#34373d;box-sizing:border-box;border:1px solid #43464c;border-radius:2.5px;"></div>
<span class="t g" style="transform:scaleX(0.8677);left:349.90px;top:367.49px;font-size:7.26px;line-height:7.26px;color:#8b8e93;font-weight:normal;letter-spacing:0.218px;">14:00</span>
<svg style="position:absolute;left:448.3px;top:365.84000000000003px" width="8" height="8" viewBox="0 0 8 8"><circle cx="4.3" cy="3.8" r="2.8" fill="none" stroke="#5f6268" stroke-width="0.8"/><path d="M4.3 2.4 V3.9 L5.2 4.6" fill="none" stroke="#55585e" stroke-width="0.6"/></svg>
<div style="position:absolute;left:472px;top:363.34000000000003px;width:127px;height:14.5px;background:#34373d;box-sizing:border-box;border:1px solid #43464c;border-radius:2.5px;"></div>
<span class="t g" style="transform:scaleX(0.8677);left:486.20px;top:367.49px;font-size:7.26px;line-height:7.26px;color:#8b8e93;font-weight:normal;letter-spacing:0.218px;">15:00</span>
<svg style="position:absolute;left:585.3px;top:365.84000000000003px" width="8" height="8" viewBox="0 0 8 8"><circle cx="4.3" cy="3.8" r="2.8" fill="none" stroke="#5f6268" stroke-width="0.8"/><path d="M4.3 2.4 V3.9 L5.2 4.6" fill="none" stroke="#55585e" stroke-width="0.6"/></svg>
<div style="position:absolute;left:609px;top:363.34000000000003px;width:98px;height:14.5px;background:#46494f;box-sizing:border-box;border:1px solid #515459;border-radius:2.5px;"></div>
<span class="t g" style="transform:scaleX(0.8488);left:616.30px;top:368.29px;font-size:7.15px;line-height:7.15px;color:#95989d;font-weight:normal;letter-spacing:0.214px;">1.17436</span>
<span class="t g" style="transform:scaleX(0.8607);left:673.20px;top:368.37px;font-size:6.82px;line-height:6.82px;color:#95989d;font-weight:normal;letter-spacing:0.205px;">CNY/kWh</span>
<span class="t" style="transform:scaleX(0.8519);left:716.60px;top:367.39px;font-size:7.26px;line-height:7.26px;color:#d8d9db;font-weight:normal;letter-spacing:0.218px;">--</span>
<div style="position:absolute;left:248px;top:399px;width:601px;height:2px;background:#303338;"></div>
<div style="position:absolute;left:254.2px;top:383.18px;width:71.80000000000001px;height:14.5px;background:#34373d;box-sizing:border-box;border:1px solid #43464c;border-radius:2.5px;"></div>
<span class="t g" style="transform:scaleX(0.8581);left:260.70px;top:387.24px;font-size:7.37px;line-height:7.37px;color:#8b8e93;font-weight:normal;letter-spacing:0.221px;">Sharp Time</span>
<svg style="position:absolute;left:314.8px;top:389.28px" width="6" height="4" viewBox="0 0 6 4"><path d="M0.7 0.7 L3 2.9 L5.3 0.7" fill="none" stroke="#9a9da1" stroke-width="1.15"/></svg>
<div style="position:absolute;left:335.0px;top:383.18px;width:127.5px;height:14.5px;background:#34373d;box-sizing:border-box;border:1px solid #43464c;border-radius:2.5px;"></div>
<span class="t g" style="transform:scaleX(0.8677);left:349.90px;top:387.33px;font-size:7.26px;line-height:7.26px;color:#8b8e93;font-weight:normal;letter-spacing:0.218px;">15:00</span>
<svg style="position:absolute;left:448.3px;top:385.68px" width="8" height="8" viewBox="0 0 8 8"><circle cx="4.3" cy="3.8" r="2.8" fill="none" stroke="#5f6268" stroke-width="0.8"/><path d="M4.3 2.4 V3.9 L5.2 4.6" fill="none" stroke="#55585e" stroke-width="0.6"/></svg>
<div style="position:absolute;left:472px;top:383.18px;width:127px;height:14.5px;background:#34373d;box-sizing:border-box;border:1px solid #43464c;border-radius:2.5px;"></div>
<span class="t g" style="transform:scaleX(0.8677);left:486.20px;top:387.33px;font-size:7.26px;line-height:7.26px;color:#8b8e93;font-weight:normal;letter-spacing:0.218px;">17:00</span>
<svg style="position:absolute;left:585.3px;top:385.68px" width="8" height="8" viewBox="0 0 8 8"><circle cx="4.3" cy="3.8" r="2.8" fill="none" stroke="#5f6268" stroke-width="0.8"/><path d="M4.3 2.4 V3.9 L5.2 4.6" fill="none" stroke="#55585e" stroke-width="0.6"/></svg>
<div style="position:absolute;left:609px;top:383.18px;width:98px;height:14.5px;background:#46494f;box-sizing:border-box;border:1px solid #515459;border-radius:2.5px;"></div>
<span class="t g" style="transform:scaleX(0.8488);left:616.30px;top:388.13px;font-size:7.15px;line-height:7.15px;color:#95989d;font-weight:normal;letter-spacing:0.214px;">1.45000</span>
<span class="t g" style="transform:scaleX(0.8607);left:673.20px;top:388.21px;font-size:6.82px;line-height:6.82px;color:#95989d;font-weight:normal;letter-spacing:0.205px;">CNY/kWh</span>
<span class="t" style="transform:scaleX(0.8519);left:716.60px;top:387.23px;font-size:7.26px;line-height:7.26px;color:#d8d9db;font-weight:normal;letter-spacing:0.218px;">--</span>
<div style="position:absolute;left:248px;top:419px;width:601px;height:2px;background:#303338;"></div>
<div style="position:absolute;left:254.2px;top:403.02000000000004px;width:71.80000000000001px;height:14.5px;background:#34373d;box-sizing:border-box;border:1px solid #43464c;border-radius:2.5px;"></div>
<span class="t g" style="transform:scaleX(0.8373);left:260.70px;top:407.08px;font-size:7.37px;line-height:7.37px;color:#8b8e93;font-weight:normal;letter-spacing:0.221px;">Peak Time</span>
<svg style="position:absolute;left:314.8px;top:409.12px" width="6" height="4" viewBox="0 0 6 4"><path d="M0.7 0.7 L3 2.9 L5.3 0.7" fill="none" stroke="#9a9da1" stroke-width="1.15"/></svg>
<div style="position:absolute;left:335.0px;top:403.02000000000004px;width:127.5px;height:14.5px;background:#34373d;box-sizing:border-box;border:1px solid #43464c;border-radius:2.5px;"></div>
<span class="t g" style="transform:scaleX(0.8677);left:349.90px;top:407.17px;font-size:7.26px;line-height:7.26px;color:#8b8e93;font-weight:normal;letter-spacing:0.218px;">17:00</span>
<svg style="position:absolute;left:448.3px;top:405.52000000000004px" width="8" height="8" viewBox="0 0 8 8"><circle cx="4.3" cy="3.8" r="2.8" fill="none" stroke="#5f6268" stroke-width="0.8"/><path d="M4.3 2.4 V3.9 L5.2 4.6" fill="none" stroke="#55585e" stroke-width="0.6"/></svg>
<div style="position:absolute;left:472px;top:403.02000000000004px;width:127px;height:14.5px;background:#34373d;box-sizing:border-box;border:1px solid #43464c;border-radius:2.5px;"></div>
<span class="t g" style="transform:scaleX(0.8677);left:486.20px;top:407.17px;font-size:7.26px;line-height:7.26px;color:#8b8e93;font-weight:normal;letter-spacing:0.218px;">19:00</span>
<svg style="position:absolute;left:585.3px;top:405.52000000000004px" width="8" height="8" viewBox="0 0 8 8"><circle cx="4.3" cy="3.8" r="2.8" fill="none" stroke="#5f6268" stroke-width="0.8"/><path d="M4.3 2.4 V3.9 L5.2 4.6" fill="none" stroke="#55585e" stroke-width="0.6"/></svg>
<div style="position:absolute;left:609px;top:403.02000000000004px;width:98px;height:14.5px;background:#46494f;box-sizing:border-box;border:1px solid #515459;border-radius:2.5px;"></div>
<span class="t g" style="transform:scaleX(0.8488);left:616.30px;top:407.97px;font-size:7.15px;line-height:7.15px;color:#95989d;font-weight:normal;letter-spacing:0.214px;">1.17436</span>
<span class="t g" style="transform:scaleX(0.8607);left:673.20px;top:408.05px;font-size:6.82px;line-height:6.82px;color:#95989d;font-weight:normal;letter-spacing:0.205px;">CNY/kWh</span>
<span class="t" style="transform:scaleX(0.8519);left:716.60px;top:407.07px;font-size:7.26px;line-height:7.26px;color:#d8d9db;font-weight:normal;letter-spacing:0.218px;">--</span>
<div style="position:absolute;left:248px;top:439px;width:601px;height:2px;background:#303338;"></div>
<div style="position:absolute;left:254.2px;top:422.86px;width:71.80000000000001px;height:14.5px;background:#34373d;box-sizing:border-box;border:1px solid #43464c;border-radius:2.5px;"></div>
<span class="t g" style="transform:scaleX(0.8461);left:260.70px;top:426.92px;font-size:7.37px;line-height:7.37px;color:#8b8e93;font-weight:normal;letter-spacing:0.221px;">Flat Time</span>
<svg style="position:absolute;left:314.8px;top:428.96px" width="6" height="4" viewBox="0 0 6 4"><path d="M0.7 0.7 L3 2.9 L5.3 0.7" fill="none" stroke="#9a9da1" stroke-width="1.15"/></svg>
<div style="position:absolute;left:335.0px;top:422.86px;width:127.5px;height:14.5px;background:#34373d;box-sizing:border-box;border:1px solid #43464c;border-radius:2.5px;"></div>
<span class="t g" style="transform:scaleX(0.8677);left:349.90px;top:427.01px;font-size:7.26px;line-height:7.26px;color:#8b8e93;font-weight:normal;letter-spacing:0.218px;">19:00</span>
<svg style="position:absolute;left:448.3px;top:425.36px" width="8" height="8" viewBox="0 0 8 8"><circle cx="4.3" cy="3.8" r="2.8" fill="none" stroke="#5f6268" stroke-width="0.8"/><path d="M4.3 2.4 V3.9 L5.2 4.6" fill="none" stroke="#55585e" stroke-width="0.6"/></svg>
<div style="position:absolute;left:472px;top:422.86px;width:127px;height:14.5px;background:#34373d;box-sizing:border-box;border:1px solid #43464c;border-radius:2.5px;"></div>
<span class="t g" style="transform:scaleX(0.8677);left:486.20px;top:427.01px;font-size:7.26px;line-height:7.26px;color:#8b8e93;font-weight:normal;letter-spacing:0.218px;">23:59</span>
<svg style="position:absolute;left:585.3px;top:425.36px" width="8" height="8" viewBox="0 0 8 8"><circle cx="4.3" cy="3.8" r="2.8" fill="none" stroke="#5f6268" stroke-width="0.8"/><path d="M4.3 2.4 V3.9 L5.2 4.6" fill="none" stroke="#55585e" stroke-width="0.6"/></svg>
<div style="position:absolute;left:609px;top:422.86px;width:98px;height:14.5px;background:#46494f;box-sizing:border-box;border:1px solid #515459;border-radius:2.5px;"></div>
<span class="t g" style="transform:scaleX(0.8488);left:616.30px;top:427.81px;font-size:7.15px;line-height:7.15px;color:#95989d;font-weight:normal;letter-spacing:0.214px;">0.70216</span>
<span class="t g" style="transform:scaleX(0.8607);left:673.20px;top:427.89px;font-size:6.82px;line-height:6.82px;color:#95989d;font-weight:normal;letter-spacing:0.205px;">CNY/kWh</span>
<span class="t" style="transform:scaleX(0.8519);left:716.60px;top:426.91px;font-size:7.26px;line-height:7.26px;color:#d8d9db;font-weight:normal;letter-spacing:0.218px;">--</span>
<div style="position:absolute;left:117px;top:192.3px;width:56.69999999999999px;height:18.399999999999977px;background:#43464b;box-sizing:border-box;border:1px solid #4a4d52;border-radius:2.5px;"></div>
<span class="t g" style="transform:scaleX(0.8153);left:124.50px;top:197.65px;font-size:7.26px;line-height:7.26px;color:#8b8e93;font-weight:normal;letter-spacing:0.218px;">January / ···</span>
<svg style="position:absolute;left:163.0px;top:199.7px" width="6" height="4" viewBox="0 0 6 4"><path d="M0.7 0.7 L3 2.9 L5.3 0.7" fill="none" stroke="#b9bbbf" stroke-width="1.15"/></svg>
<span class="t b" style="left:178.40px;top:200.23px;font-size:6.82px;line-height:6.82px;color:#c8c9cb;font-weight:bold;letter-spacing:0px;">~</span>
<div style="position:absolute;left:187px;top:192.3px;width:57px;height:18.399999999999977px;background:#43464b;box-sizing:border-box;border:1px solid #4a4d52;border-radius:2.5px;"></div>
<span class="t g" style="transform:scaleX(0.8670);left:194.50px;top:197.65px;font-size:7.26px;line-height:7.26px;color:#8b8e93;font-weight:normal;letter-spacing:0.218px;">June / 30th</span>
<svg style="position:absolute;left:233.3px;top:199.7px" width="6" height="4" viewBox="0 0 6 4"><path d="M0.7 0.7 L3 2.9 L5.3 0.7" fill="none" stroke="#b9bbbf" stroke-width="1.15"/></svg>
<div style="position:absolute;left:116.5px;top:341.8px;width:57.30000000000001px;height:18.399999999999977px;background:#43464b;box-sizing:border-box;border:1px solid #4a4d52;border-radius:2.5px;"></div>
<span class="t g" style="transform:scaleX(0.8404);left:124.00px;top:347.15px;font-size:7.26px;line-height:7.26px;color:#8b8e93;font-weight:normal;letter-spacing:0.218px;">July / 1st</span>
<svg style="position:absolute;left:163.10000000000002px;top:349.2px" width="6" height="4" viewBox="0 0 6 4"><path d="M0.7 0.7 L3 2.9 L5.3 0.7" fill="none" stroke="#b9bbbf" stroke-width="1.15"/></svg>
<span class="t b" style="left:178.40px;top:349.73px;font-size:6.82px;line-height:6.82px;color:#c8c9cb;font-weight:bold;letter-spacing:0px;">~</span>
<div style="position:absolute;left:187px;top:341.8px;width:57px;height:18.399999999999977px;background:#43464b;box-sizing:border-box;border:1px solid #4a4d52;border-radius:2.5px;"></div>
<span class="t g" style="transform:scaleX(0.8840);left:194.50px;top:347.15px;font-size:7.26px;line-height:7.26px;color:#8b8e93;font-weight:normal;letter-spacing:0.218px;">Septemb···</span>
<svg style="position:absolute;left:233.3px;top:349.2px" width="6" height="4" viewBox="0 0 6 4"><path d="M0.7 0.7 L3 2.9 L5.3 0.7" fill="none" stroke="#b9bbbf" stroke-width="1.15"/></svg>
<div style="position:absolute;left:857px;top:28.5px;width:6px;height:404.0px;background:#111317;"></div>
<div style="position:absolute;left:1.5px;top:2.5px;width:861.5px;height:26.0px;background:#1c1f26;border-radius:5px 0 0 0;"></div>
<span class="t b" style="transform:scaleX(0.8358);left:16.60px;top:10.82px;font-size:8.36px;line-height:8.36px;color:#ffffff;font-weight:bold;letter-spacing:0.251px;">iEMS Management system</span>
<span class="t" style="transform:scaleX(0.8593);left:262.80px;top:11.57px;font-size:7.48px;line-height:7.48px;color:#c4c6ca;font-weight:normal;letter-spacing:0.224px;">Comprehensive overview</span>
<span class="t" style="transform:scaleX(0.8383);left:351.90px;top:11.57px;font-size:7.48px;line-height:7.48px;color:#c4c6ca;font-weight:normal;letter-spacing:0.224px;">Real-time</span>
<span class="t b" style="transform:scaleX(0.8011);left:393.10px;top:11.57px;font-size:7.48px;line-height:7.48px;color:#ffffff;font-weight:bold;letter-spacing:0.224px;">Intelligent decision</span>
<span class="t" style="transform:scaleX(0.8499);left:463.70px;top:11.57px;font-size:7.48px;line-height:7.48px;color:#c4c6ca;font-weight:normal;letter-spacing:0.224px;">Carbon emission</span>
<span class="t" style="transform:scaleX(0.8637);left:526.90px;top:11.57px;font-size:7.48px;line-height:7.48px;color:#c4c6ca;font-weight:normal;letter-spacing:0.224px;">Energy consumption</span>
<span class="t" style="transform:scaleX(0.8666);left:601.60px;top:11.57px;font-size:7.48px;line-height:7.48px;color:#c4c6ca;font-weight:normal;letter-spacing:0.224px;">Report</span>
<span class="t" style="transform:scaleX(0.8453);left:634.60px;top:11.57px;font-size:7.48px;line-height:7.48px;color:#c4c6ca;font-weight:normal;letter-spacing:0.224px;">System</span>
<span class="t" style="transform:scaleX(0.8126);left:699.50px;top:11.57px;font-size:7.48px;line-height:7.48px;color:#cdcfd2;font-weight:normal;letter-spacing:0.224px;">English(EN)</span>
<div style="position:absolute;left:398.8px;top:27.2px;width:46.599999999999966px;height:2.1000000000000014px;background:#1ac4a0;"></div>
<svg style="position:absolute;left:741px;top:15.3px" width="6" height="4" viewBox="0 0 6 4"><path d="M0.7 0.7 L3 2.9 L5.3 0.7" fill="none" stroke="#9a9ca0" stroke-width="1.15"/></svg>
<span class="t b" style="transform:scaleX(0.7935);left:758.00px;top:11.57px;font-size:7.48px;line-height:7.48px;color:#ebeced;font-weight:bold;letter-spacing:0.224px;">huanglei2@topband.com.cn</span>
<svg style="position:absolute;left:845.2px;top:14.6px" width="4" height="3" viewBox="0 0 4 3"><path d="M0 0 H4 L2 2.6 Z" fill="#e8e8e8"/></svg>
<div style="position:absolute;left:1.5px;top:28.5px;width:94.0px;height:404.0px;background:#1c1f26;border-radius:0 0 0 5px;"></div>
<div style="position:absolute;left:95.5px;top:28.5px;width:7.5px;height:404.0px;background:#101216;"></div>
<span class="t" style="transform:scaleX(0.8869);left:9.80px;top:37.04px;font-size:7.04px;line-height:7.04px;color:#9fa2a7;font-weight:normal;letter-spacing:0.211px;">新能源示范点</span>
<svg style="position:absolute;left:78.6px;top:37.2px" width="8" height="7" viewBox="0 0 8 7"><path d="M0.5 2 H7.3 L5.6 0.4 M7.5 5 H0.7 L2.4 6.6" fill="none" stroke="#c9cbce" stroke-width="0.9"/></svg>
<span class="t" style="transform:scaleX(0.8571);left:29.00px;top:57.17px;font-size:7.48px;line-height:7.48px;color:#b6b8bc;font-weight:normal;letter-spacing:0.224px;">Photovoltaic</span>
<span class="t" style="transform:scaleX(0.8128);left:29.00px;top:65.97px;font-size:7.48px;line-height:7.48px;color:#b6b8bc;font-weight:normal;letter-spacing:0.224px;">Forecast</span>
<div style="position:absolute;left:2.3px;top:78.5px;width:91.0px;height:24.900000000000006px;background:#12151a;"></div>
<span class="t" style="transform:scaleX(0.8268);left:29.00px;top:83.25px;font-size:7.26px;line-height:7.26px;color:#13c19f;font-weight:normal;letter-spacing:0.218px;">Energy Storage</span>
<span class="t" style="transform:scaleX(0.8519);left:29.00px;top:92.35px;font-size:7.26px;line-height:7.26px;color:#13c19f;font-weight:normal;letter-spacing:0.218px;">Operation Strategy</span>
<span class="t" style="transform:scaleX(0.8270);left:29.00px;top:114.05px;font-size:7.26px;line-height:7.26px;color:#b6b8bc;font-weight:normal;letter-spacing:0.218px;">Load Forecast</span>
<svg style="position:absolute;left:14.2px;top:61.2px" width="8.8" height="9" viewBox="0 0 8.8 9"><rect x="0" y="0" width="8.8" height="7.6" rx="1.6" fill="#6d7075"/><rect x="1.4" y="1.4" width="2.7" height="2.3" fill="#a4a6aa"/><rect x="4.7" y="1.4" width="2.7" height="2.3" fill="#a4a6aa"/><rect x="1.4" y="4.2" width="2.7" height="2.4" fill="#b0b2b5"/><rect x="4.7" y="4.2" width="2.7" height="2.4" fill="#b0b2b5"/><path d="M2.6 9 L4.4 7.2 L6.2 9 Z" fill="#8a8d91"/></svg>
<svg style="position:absolute;left:14.1px;top:88.1px" width="8.2" height="8" viewBox="0 0 8.2 8"><path d="M0 1.2 Q0 0 1.2 0 H7 Q8.2 0 8.2 1.2 V6.8 Q8.2 8 7 8 H5.2 L4.1 7.1 L3 8 H1.2 Q0 8 0 6.8 Z" fill="#1fd6ab"/><circle cx="4.2" cy="3.8" r="1.3" fill="#0b2a26"/></svg>
<svg style="position:absolute;left:14.1px;top:113.6px" width="9.2" height="8.6" viewBox="0 0 9.2 8.6"><path d="M1.2 8.2 A4.5 4.5 0 1 1 8 8.2 H5.6 L4.6 7.6 L3.6 8.2 Z" fill="#c3c5c8"/><circle cx="4.5" cy="5.6" r="1.2" fill="#2a2d33"/></svg>
<svg style="position:absolute;left:819px;top:62.3px" width="6.2" height="6" viewBox="0 0 6.2 6"><path d="M3 0.5 H1.1 Q0.5 0.5 0.5 1.1 V4.9 Q0.5 5.5 1.1 5.5 H4.9 Q5.5 5.5 5.5 4.9 V3.2" fill="none" stroke="#e3f4f0" stroke-width="0.85"/><path d="M2.4 3.7 L5.8 0.3" stroke="#e3f4f0" stroke-width="0.9"/></svg>
<div style="position:absolute;left:0;top:432.5px;width:863px;height:5px;background:#fbfbfb"></div>
<div style="position:absolute;left:0;top:434px;width:20px;height:3px;background:#ddd6d4"></div>
<div style="position:absolute;left:150px;top:434px;width:90px;height:3px;background:#e8e6ec"></div>
<div style="position:absolute;left:240px;top:434px;width:192px;height:3px;background:#f4f0e8"></div>
<div style="position:absolute;left:432px;top:434px;width:431px;height:3px;background:#f3f2e3"></div>
</body></html>
